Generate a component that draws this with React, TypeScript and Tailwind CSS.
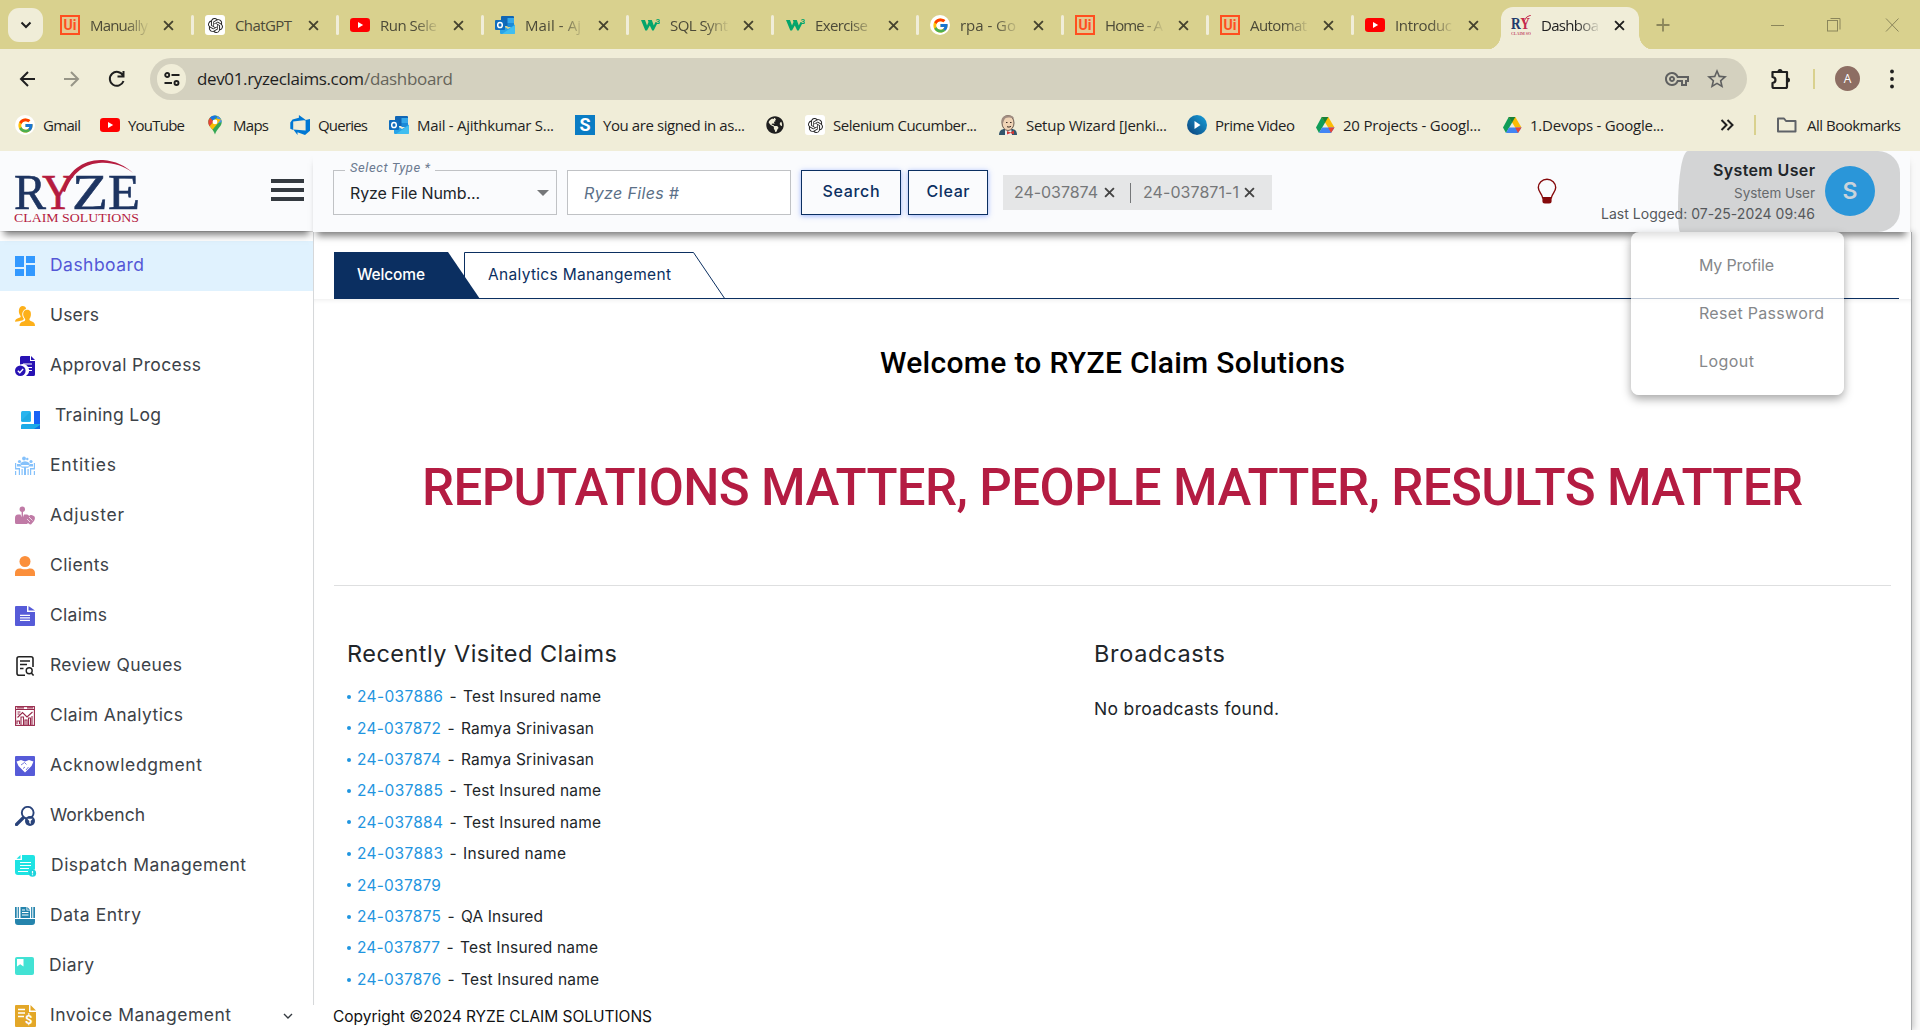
import { useLayoutEffect, useRef, useState, type ReactNode } from "react";
import { FcGoogle } from "react-icons/fc";
import { SiOpenai } from "react-icons/si";
import { MdOutlineVpnKey, MdStarBorder } from "react-icons/md";
import { FaGlobeAmericas } from "react-icons/fa";

/* Single line of text whose tracking is adjusted so that it fills the given width. */
function Fit({ w, className = "", children }: { w: number; className?: string; children: string }) {
  const ref = useRef<HTMLSpanElement>(null);
  const [spacing, setSpacing] = useState(0);
  useLayoutEffect(() => {
    const el = ref.current;
    if (!el) return;
    el.style.letterSpacing = "0px";
    const natural = el.getBoundingClientRect().width;
    const next = (w - natural) / Math.max(1, children.length - 1);
    el.style.letterSpacing = `${next}px`;
    setSpacing(next);
  }, [w, children]);
  return (
    <span className={`block shrink-0 whitespace-nowrap ${className}`} style={{ width: w }}>
      <span ref={ref} className="inline-block whitespace-pre" style={{ letterSpacing: `${spacing}px` }}>
        {children}
      </span>
    </span>
  );
}

/* ---------- Favicons ---------- */
const UiIcon = () => (
  <span className="flex size-5 shrink-0 items-center justify-center border-2 border-[#ff4f1f] bg-[#e3c992] font-['Roboto',sans-serif] text-[14px] leading-none font-bold text-[#ff4f1f]">
    Ui
  </span>
);
const GptIcon = () => (
  <span className="flex size-5 shrink-0 items-center justify-center rounded-[3px] bg-white text-[#222]">
    <SiOpenai size={15} />
  </span>
);
const YtIcon = () => (
  <svg viewBox="0 0 20 20" className="size-5 shrink-0">
    <rect y="3" width="20" height="14" rx="3.2" fill="#f00" />
    <path d="M8 7v6l5.2-3z" fill="#fff" />
  </svg>
);
const OutlookIcon = () => (
  <svg viewBox="0 0 20 20" className="size-5 shrink-0">
    <rect x="6" y="1" width="13" height="10" rx="1" fill="#1066b5" />
    <rect x="12.5" y="3" width="6.5" height="5" fill="#35a8ea" />
    <rect x="12.5" y="8" width="6.5" height="4" fill="#1b8ad8" />
    <path d="M5 9l8 5 7-4.5V18a1 1 0 0 1-1 1H6a1 1 0 0 1-1-1z" fill="#28a3e8" />
    <path d="M20 10v8a1 1 0 0 1-1 1H7z" fill="#50d0f5" opacity=".6" />
    <rect y="5" width="10" height="10" rx="1" fill="#0f6cbd" />
    <ellipse cx="5" cy="10" rx="2.3" ry="2.6" fill="none" stroke="#fff" strokeWidth="1.5" />
  </svg>
);
const W3Icon = () => (
  <svg viewBox="0 0 20 20" className="size-5 shrink-0">
    <path d="M1 5h4l2 5.500L8.500 7 7.800 5h4l2 5.500L15.500 7l2 1-3.800 7.500h-1.500L9.800 10.500 7 15.500H5.300z" fill="#04a56b" />
    <text x="15.500" y="9" fontSize="8" fontWeight="700" fill="#04a56b" fontFamily="Roboto, sans-serif">3</text>
  </svg>
);
const GIcon = () => (
  <span className="flex size-5 shrink-0 items-center justify-center rounded-full bg-white">
    <FcGoogle size={17} />
  </span>
);
const MapsIcon = () => (
  <svg viewBox="0 0 20 20" className="size-5 shrink-0">
    <path d="M10 .5c4 0 6.700 3 6.700 6.600 0 5-5 6.500-6.700 12.400C8.300 13.600 3.300 12.100 3.300 7.100 3.300 3.500 6 .5 10 .5z" fill="#34a853" />
    <path d="M10 .5c-2 0-3.800.8-5 2.200L8.200 5.400 12 .9A6.500 6.500 0 0 0 10 .5z" fill="#1a73e8" />
    <path d="M5 2.700A6.500 6.500 0 0 0 3.300 7.100c0 1.700.5 3 1.300 4.200l4-4.700z" fill="#ea4335" />
    <path d="M12 .9c2.500.7 4.700 3.100 4.700 6.100L11 9z" fill="#4a90f5" />
    <path d="M4.600 11.300c1 1.300 2 2.300 2.900 3.500L16 4.500l-5-1z" fill="#fbbc04" />
    <circle cx="10" cy="6.900" r="2.400" fill="#fff" />
  </svg>
);
const AzureIcon = () => (
  <svg viewBox="0 0 20 20" className="size-5 shrink-0">
    <path d="M20 4v11.700L15 20 7.500 17.200V20l-4.200-5.600 12.300 1V5zM15.800 5L8.900 0v2.700L2.500 4.600.3 7.400v6.400l2.900 1.200V6.600z" fill="#0078d4" />
  </svg>
);
const SIcon = () => (
  <span className="flex size-5 shrink-0 items-center justify-center bg-[#0a7cc4] font-['Roboto',sans-serif] text-[18px] leading-none font-bold text-white">S</span>
);
const JenkinsIcon = () => (
  <svg viewBox="0 0 20 20" className="size-5 shrink-0">
    <path d="M1 20c0-4 2.500-6 5.500-6h7c3.500 0 5.500 2 5.500 6z" fill="#33556b" />
    <path d="M7 13h6l1 7H7z" fill="#eee" />
    <ellipse cx="10" cy="8" rx="6" ry="7.500" fill="#efd3b5" stroke="#4a3a32" strokeWidth=".8" />
    <path d="M3.600 8C2.500 3 6 .3 10 .3S16 2 16 4c-3-1.800-7-2-9-.5C6 5 5.500 7 4.800 9z" fill="#a08c80" />
    <path d="M8 7.500h1.500M12 7.500h1.500M9 11.700q2 1 4-.3" stroke="#3a2a22" fill="none" />
    <path d="M9 16l3.500 1.500L16 15.500v4l-3.500-1.500L9 19.500z" fill="#d33833" />
  </svg>
);
const PrimeIcon = () => (
  <svg viewBox="0 0 20 20" className="size-5 shrink-0">
    <defs>
      <linearGradient id="prime" x1="1" y1="0" x2="0" y2="1">
        <stop offset="0" stopColor="#16a0dc" />
        <stop offset="1" stopColor="#0c3f77" />
      </linearGradient>
    </defs>
    <circle cx="10" cy="10" r="10" fill="url(#prime)" />
    <path d="M7.500 6v8l6-4z" fill="#fff" />
  </svg>
);
const DriveIcon = () => (
  <svg viewBox="0 0 20 20" className="size-5 shrink-0">
    <path d="M6.700 2h6.600L10 7.800 4 18 1 12.500z" fill="#0f9d58" />
    <path d="M6.700 2h6.600l6.200 10.500h-6.300z" fill="#fbbc04" />
    <path d="M7 12.500h12.500L16 18H4z" fill="#4285f4" />
    <path d="M6.700 2h6.600L10 7.800z" fill="#188038" />
    <path d="M13.200 12.500h6.300L16 18z" fill="#ea4335" />
  </svg>
);
const RyzeFav = () => (
  <svg viewBox="0 0 20 20" className="size-5 shrink-0 overflow-hidden" fontFamily="'Liberation Serif', serif" fontWeight="700">
    <text x="0" y="14" fontSize="16" fill="#223a6b" textLength="19" lengthAdjust="spacingAndGlyphs">
      R<tspan fill="#c42a4d">Y</tspan>
    </text>
    <path d="M13 6q2-5 7-6" stroke="#c42a4d" fill="none" />
    <text x="0" y="19.500" fontSize="4.500" fill="#c4506a" textLength="20" lengthAdjust="spacingAndGlyphs">CLAIM SO</text>
  </svg>
);
const Cross = ({ className = "" }: { className?: string }) => (
  <svg viewBox="0 0 10 10" className={`size-[11px] shrink-0 ${className}`}>
    <path d="M1 1l8 8M9 1L1 9" stroke="currentColor" strokeWidth="1.700" />
  </svg>
);

const tabs: { icon: ReactNode; text: string; w: number }[] = [
  { icon: <UiIcon />, text: "Manually", w: 58 },
  { icon: <GptIcon />, text: "ChatGPT", w: 57 },
  { icon: <YtIcon />, text: "Run Sele", w: 57 },
  { icon: <OutlookIcon />, text: "Mail - Aj", w: 56 },
  { icon: <W3Icon />, text: "SQL Synt", w: 58 },
  { icon: <W3Icon />, text: "Exercise", w: 53 },
  { icon: <GIcon />, text: "rpa - Go", w: 56 },
  { icon: <UiIcon />, text: "Home - A", w: 58 },
  { icon: <UiIcon />, text: "Automat", w: 57 },
  { icon: <YtIcon />, text: "Introduc", w: 57 },
];

function TabStrip() {
  return (
    <div className="flex h-[50px] bg-[#d9d18e]">
      <div className="mt-2 ml-2 flex h-[34px] w-[35px] items-center justify-center rounded-[11px] bg-[#f0edd8]">
        <svg viewBox="0 0 12 8" className="h-2 w-3">
          <path d="M1.500 1.500L6 6l4.500-4.500" fill="none" stroke="#1f1f1f" strokeWidth="2" />
        </svg>
      </div>
      <div className="ml-[6px] flex">
        {tabs.map((t, i) => (
          <div key={i} className={`flex h-[50px] items-center pl-[11px] ${i === 9 ? "w-[132px]" : "w-[145px]"}`}>
            {t.icon}
            <div className={`ml-[10px] w-[60px] ${i === 1 ? "" : "[mask-image:linear-gradient(to_right,#000_58%,transparent_100%)]"}`}>
              <Fit w={t.w} className="text-[15px] text-[#4c4a38]">{t.text}</Fit>
            </div>
            <Cross className="ml-[13px] text-[#46442f]" />
            {i !== 9 && <span className="ml-[17px] h-5 w-[3px] rounded bg-[#f0edd8]" />}
          </div>
        ))}
      </div>
      <div className="size-[15px] self-end bg-[radial-gradient(circle_at_0_0,transparent_14.500px,#f0edd8_15px)]" />
      <div className="mt-[7px] flex h-[43px] w-[138px] items-center rounded-t-[12px] bg-[#f0edd8] pb-[7px] pl-[10px]">
        <RyzeFav />
        <div className="ml-[10px] w-[60px] [mask-image:linear-gradient(to_right,#000_58%,transparent_100%)]">
          <Fit w={58} className="text-[15px] text-[#1f1f1f]">Dashboa</Fit>
        </div>
        <Cross className="ml-[13px] text-[#1f1f1f]" />
      </div>
      <div className="size-[15px] self-end bg-[radial-gradient(circle_at_100%_0,transparent_14.500px,#f0edd8_15px)]" />
      <svg viewBox="0 0 14 14" className="mt-[18px] ml-[2px] size-[14px]">
        <path d="M7 .5v13M.5 7h13" stroke="#8b865b" strokeWidth="1.800" />
      </svg>
      <svg viewBox="0 0 130 16" className="mt-[17px] ml-[101px] h-4 w-[130px]" fill="none" stroke="#8b865b">
        <path d="M0 8.500h13M115 1.500l12.500 13M127.500 1.500l-12.500 13M59.500 1.500h9.500v11" />
        <rect x="56.500" y="3.500" width="10" height="10.500" />
      </svg>
    </div>
  );
}

function Toolbar() {
  return (
    <div className="-mt-px flex h-[59px] items-center bg-[#f0edd8] text-[#1f1f1f]">
      <svg viewBox="0 0 106 18" className="ml-[19px] h-[18px] w-[106px]" fill="none" strokeWidth="2">
        <path d="M16 9H2M9 2L2 9l7 7" stroke="#1f1f1f" />
        <path d="M45 9h14M52 2l7 7-7 7" stroke="#979587" />
        <path d="M104 5.500A7 7 0 1 0 104.500 11M104.500 1v5.500H98.500" stroke="#1f1f1f" />
      </svg>
      <div className="ml-[25px] flex h-[42px] w-[1597px] items-center rounded-full bg-[#d4d1bf] pl-[7px]">
        <span className="flex h-[30px] w-[29px] items-center justify-center rounded-full bg-[#f0edd8]">
          <svg viewBox="0 0 16 14" className="h-[14px] w-4" fill="none" stroke="#1f1f1f" strokeWidth="1.900">
            <circle cx="3.200" cy="3" r="2" />
            <path d="M7.500 3H15.500M.5 11H8" />
            <circle cx="12.500" cy="11" r="2" />
          </svg>
        </span>
        <span className="ml-[11px] flex font-['Open_Sans','Noto_Sans',sans-serif] text-[17px] leading-6">
          <Fit w={167} className="text-[#1f1f1f]">dev01.ryzeclaims.com</Fit>
          <Fit w={89} className="text-[#66645a]">/dashboard</Fit>
        </span>
        <MdOutlineVpnKey className="ml-[1212px] text-[#5f6060]" size={24} />
        <MdStarBorder className="ml-[16px] text-[#5f6060]" size={24} />
      </div>
      <svg viewBox="0 0 22 22" className="ml-[23px] size-[22px]">
        <path d="M2.500 4h14.500v14.500q0 1.500-1.500 1.500H4q-1.500 0-1.500-1.500V15q3-.5 3-3t-3-3z" fill="none" stroke="#1f1f1f" strokeWidth="2.200" strokeLinejoin="round" />
        <path d="M7.500 3.500a2.500 2.500 0 0 1 5 0zM17.500 9.500a2.500 2.500 0 0 1 0 5z" fill="#1f1f1f" />
      </svg>
      <span className="ml-[21px] h-5 w-[2px] bg-[#d9d18e]" />
      <span className="ml-[20px] flex size-[25px] items-center justify-center rounded-full bg-[#8d6e63] text-[12px] text-white">A</span>
      <svg viewBox="0 0 4 20" className="ml-[30px] h-5 w-1" fill="#1f1f1f">
        <circle cx="2" cy="2.500" r="1.900" />
        <circle cx="2" cy="10" r="1.900" />
        <circle cx="2" cy="17.500" r="1.900" />
      </svg>
    </div>
  );
}

function Bookmark({ icon, text, w, m }: { icon: ReactNode; text?: string; w?: number; m: string }) {
  return (
    <div className={`flex items-center gap-2 ${m}`}>
      {icon}
      {text && w && <Fit w={w} className="text-[15px]">{text}</Fit>}
    </div>
  );
}

function Bookmarks() {
  return (
    <div className="flex h-[43px] items-center bg-[#f0edd8] pb-[9px] text-[#1f1f1f]">
      <Bookmark m="ml-[15px] -mr-[2px]" icon={<GIcon />} text="Gmail" w={38} />
      <Bookmark m="ml-[21px]" icon={<YtIcon />} text="YouTube" w={57} />
      <Bookmark m="ml-[20px]" icon={<MapsIcon />} text="Maps" w={36} />
      <Bookmark m="ml-[21px]" icon={<AzureIcon />} text="Queries" w={50} />
      <Bookmark m="ml-[21px]" icon={<OutlookIcon />} text="Mail - Ajithkumar S..." w={137} />
      <Bookmark m="ml-[21px]" icon={<SIcon />} text="You are signed in as..." w={142} />
      <Bookmark m="ml-[20px]" icon={<span className="flex size-5 items-center justify-center"><FaGlobeAmericas size={18} /></span>} />
      <Bookmark m="ml-[20px]" icon={<GptIcon />} text="Selenium Cucumber..." w={144} />
      <Bookmark m="ml-[21px]" icon={<JenkinsIcon />} text="Setup Wizard [Jenki..." w={141} />
      <Bookmark m="ml-[20px]" icon={<PrimeIcon />} text="Prime Video" w={80} />
      <Bookmark m="ml-[20px]" icon={<DriveIcon />} text="20 Projects - Googl..." w={138} />
      <Bookmark m="ml-[21px]" icon={<DriveIcon />} text="1.Devops - Google..." w={134} />
      <svg viewBox="0 0 14 12" className="ml-[56px] h-3 w-[14px]" fill="none" stroke="#1f1f1f" strokeWidth="2">
        <path d="M1.500 1l5 5-5 5M7.500 1l5 5-5 5" />
      </svg>
      <span className="ml-[20px] h-5 w-[2px] bg-[#d9d18e]" />
      <svg viewBox="0 0 22 18" className="ml-[20px] h-[18px] w-[22px]" fill="none" stroke="#5f6368" strokeWidth="2">
        <path d="M2 2.500h6l2 2.500h9.500v10.500H2z" strokeLinejoin="round" />
      </svg>
      <Fit w={94} className="ml-[9px] text-[15px]">All Bookmarks</Fit>
    </div>
  );
}

/* ---------- Application header ---------- */
function Logo() {
  return (
    <svg viewBox="0 0 128 66" className="h-[66px] w-[128px]" fontFamily="'Liberation Serif', serif">
      <g fontSize="51" fill="#1d3461" stroke="#1d3461" strokeWidth=".6">
        <text x="0" y="51" textLength="32" lengthAdjust="spacingAndGlyphs">R</text>
        <text x="28" y="51" textLength="32" lengthAdjust="spacingAndGlyphs" fill="#b51c3f" stroke="#b51c3f">Y</text>
        <text x="58" y="51" textLength="36" lengthAdjust="spacingAndGlyphs">Z</text>
        <text x="94" y="51" textLength="32" lengthAdjust="spacingAndGlyphs">E</text>
      </g>
      <path d="M48 33C54 12 70 1 89 2c12 .8 23 6 30 13C110 8 99 4.500 88 4.800 70 5.500 58 15 51 34z" fill="#b51c3f" />
      <text x="0" y="63.500" fontSize="13.500" fill="#b51c3f" textLength="125" lengthAdjust="spacingAndGlyphs">CLAIM SOLUTIONS</text>
    </svg>
  );
}

function Header() {
  return (
    <header className="relative z-20 flex h-[81px] w-[1910px] font-['Roboto',sans-serif]">
      <div className="flex h-[80px] w-[313px] bg-[#fafbfd] shadow-[0_8px_7px_-4px_rgba(0,0,0,0.5)]">
        <div className="mt-[7px] ml-[14px]"><Logo /></div>
        <div className="mt-[28px] ml-[129px] flex h-[22px] w-[33px] flex-col justify-between">
          <span className="h-[4px] bg-[#343a40]" />
          <span className="h-[4px] bg-[#343a40]" />
          <span className="h-[4px] bg-[#343a40]" />
        </div>
      </div>
      <div className="relative flex flex-1 bg-[#fafbfd] shadow-[0_8px_7px_-4px_rgba(0,0,0,0.5)]">
        <div className="relative mt-[19px] ml-[20px] flex h-[45px] w-[224px] items-center border border-[#c0c2c5] pl-4">
          <span className="absolute -top-[11px] left-[11px] bg-[#fafbfd] px-[5px] text-[13px] leading-4 text-[#6b7a90] italic">
            <Fit w={80}>Select Type *</Fit>
          </span>
          <Fit w={130} className="font-['Inter',sans-serif] text-[16px] text-[#212529]">Ryze File Numb...</Fit>
          <svg viewBox="0 0 12 6" className="ml-[57px] h-[6px] w-3"><path d="M0 0h12L6 6z" fill="#757779" /></svg>
        </div>
        <div className="mt-[19px] ml-[10px] flex h-[45px] w-[224px] items-center border border-[#c0c2c5] bg-white pl-4 font-['Inter',sans-serif] text-[16px] text-[#5b7088] italic">
          <Fit w={95}>Ryze Files #</Fit>
        </div>
        <button className="mt-[19px] ml-[10px] flex h-[45px] w-[100px] items-center justify-center border border-[#0b2f61] pb-1 font-['Inter',sans-serif] text-[16px] font-medium text-[#0b2f61] shadow-[0_1px_5px_rgba(60,110,255,0.5)]">
          <Fit w={57}>Search</Fit>
        </button>
        <button className="mt-[19px] ml-[7px] flex h-[45px] w-[80px] items-center justify-center border border-[#0b2f61] pb-1 font-['Inter',sans-serif] text-[16px] font-medium text-[#0b2f61] shadow-[0_1px_5px_rgba(60,110,255,0.5)]">
          <Fit w={43}>Clear</Fit>
        </button>
        <div className="mt-[24px] ml-[15px] flex h-[35px] w-[269px] items-center bg-[#e5e6e7] pl-[11px] font-['Inter',sans-serif] text-[16px] text-[#757779]">
          <Fit w={84} className="pb-px">24-037874</Fit>
          <Cross className="ml-[6px] text-[#444]" />
          <span className="ml-[15px] h-5 w-px bg-[#757779]" />
          <Fit w={96} className="ml-[12px] pb-px">24-037871-1</Fit>
          <Cross className="ml-[5px] text-[#444]" />
        </div>
        <svg viewBox="0 0 20 26" className="mt-[27px] ml-[265px] h-[26px] w-5">
          <path d="M10 1.200c-4.900 0-8.700 3.800-8.700 8.300 0 4.200 3.900 6.400 4.300 10.200h8.800c.4-3.800 4.300-6 4.300-10.200 0-4.500-3.800-8.300-8.700-8.300z" fill="none" stroke="#850a0c" strokeWidth="1.400" />
          <path d="M5.400 19.300h9.200v3.700q0 2.500-2.500 2.500H7.900q-2.500 0-2.500-2.500z" fill="#850a0c" />
        </svg>
        <div className="absolute top-0 right-[10px] h-[81px] w-[222px] bg-[#d3d4d5] [border-radius:10px_22px_22px_2px/56px_22px_22px_25px]" />
        <div className="relative ml-auto flex flex-col items-end pt-[7px] font-['Inter',sans-serif]">
          <Fit w={102} className="text-[16px] leading-[25px] font-semibold text-[#212529]">System User</Fit>
          <Fit w={81} className="text-[13.500px] leading-[21px] text-[#66696c]">System User</Fit>
          <Fit w={214} className="text-[14px] leading-[19px] text-[#55585b]">Last Logged: 07-25-2024 09:46</Fit>
        </div>
        <div className="relative mt-[15px] mr-[35px] ml-[10px] flex size-[50px] items-center justify-center rounded-full bg-[#2a96d9] font-['Inter',sans-serif] text-[23px] font-semibold text-[#c9d3db]">S</div>
      </div>
    </header>
  );
}

function UserMenu() {
  return (
    <div className="absolute top-[232px] left-[1631px] z-30 h-[163px] w-[213px] rounded-[8px] bg-white/75 pt-[9px] pl-[68px] font-['Inter',sans-serif] text-[16px] leading-[48px] text-[#85878a] shadow-[0_4px_10px_rgba(0,0,0,0.35)]">
      <Fit w={75}>My Profile</Fit>
      <Fit w={125}>Reset Password</Fit>
      <Fit w={55}>Logout</Fit>
    </div>
  );
}

/* ---------- Sidebar ---------- */
const I = ({ children, className = "size-5" }: { children: ReactNode; className?: string }) => (
  <svg viewBox="0 0 20 20" className={`shrink-0 ${className}`}>{children}</svg>
);

const nav: { text: string; w: number; gap: string; icon: ReactNode }[] = [
  { text: "Dashboard", w: 94, gap: "ml-[15px]", icon: <I><path d="M0 0h9v11H0zM0 13h9v7H0zM11 0h9v7h-9zM11 9h9v11h-9z" fill="#3399ff" /></I> },
  {
    text: "Users", w: 49, gap: "ml-[15px]",
    icon: <I><g fill="#fdb01a"><path d="M7.500 0c2.200 0 3.500 1.300 3.600 3C8.300 3.800 7 6 7.300 9c.2 1.800 1 3 1.800 4l-1.800 1.500C5 15 3 15.500 0 15.800c.2-2.600 2-3.300 5-4.200.8-.3.800-1.200.4-1.800C2.500 6 4 0 7.500 0z" /><path d="M12.200 3.800c3 0 4 2.400 3.700 5.200-.2 2-.9 3-1.500 4 .1 1.500.6 1.700 2.600 2.400 2.300.8 3 2.200 3 4.600H4.500c0-2.600 1.500-3.900 3.700-4.500 1.600-.5 2-.9 2-2.300C8.500 11 8 9 8.200 7.500c.3-2.500 1.600-3.700 4-3.700z" /></g></I>,
  },
  {
    text: "Approval Process", w: 151, gap: "ml-[15px]",
    icon: <I><path d="M5 1.500Q5 0 6.500 0H15v5h5v13.500q0 1.500-1.500 1.500H11a6.500 6.500 0 0 0-6-11.500zM16 0l4 4h-4z" fill="#2812b4" /><circle cx="5.300" cy="14.700" r="5.300" fill="#2812b4" /><path d="M2.800 14.800l2 2 3.400-3.800" stroke="#fff" strokeWidth="1.300" fill="none" /><path d="M8 8h9M11 11.500h6M12.500 14.500H17" stroke="#fff" strokeWidth="1.100" /></I>,
  },
  {
    text: "Training Log", w: 106, gap: "ml-[20px] mt-[10px]",
    icon: <I><rect x="1" y="0" width="10" height="11" rx="1.500" fill="#28b4ee" /><path d="M1 10L10 1v8z" fill="#149fd8" opacity=".5" /><path d="M14 0h6v13h-6z" fill="#1762f5" /><path d="M1 14.500q0-1.500 1.500-1.500H20v5H1z" fill="#1cabe8" /><path d="M14 18l6-4v4z" fill="#1271e0" /></I>,
  },
  {
    text: "Entities", w: 66, gap: "ml-[15px]",
    icon: <I><g fill="#85c1fb"><circle cx="9" cy="2.500" r="1.900" /><circle cx="12.300" cy="3" r="1.200" /><circle cx="4.500" cy="5.500" r="1.600" /><circle cx="16" cy="5.500" r="1.600" /><path d="M5.500 9V7q4.500-3.500 9 0v2zM0 7h1.200v5H5v7H3.800v-5.500H0zM20 7h-1.200v5H15v7h1.200v-5.500H20z" /><path d="M2 8h3l2 2.500H2zM18 8h-3l-2 2.500h5zM6.500 10.500h7v1.200H11V19H9v-7.300H6.500zM0 15h1.200v4H0zM18.800 15H20v4h-1.200zM6.500 13h1.200v6H6.500zM12.500 13h1.200v6h-1.200z" /></g></I>,
  },
  {
    text: "Adjuster", w: 74, gap: "ml-[15px]",
    icon: <I><g fill="#c07aa6"><circle cx="7.300" cy="3.200" r="2.700" /><path d="M6.600 5h1.400v8H6.600zM0 12q0-3.500 3-3.500h2.500l1.800 4.500L9 8.500h3q1.500 0 2 1.500l1.500-1q2-.5 4 1.500 1 2-.5 4.500l-3 3.500q-1.500 0-3-1.500l-1 1H1.500Q0 18 0 16.500z" /></g><path d="M12 13l3 3M14 11l3.500 3.500" stroke="#fff" strokeWidth=".7" /></I>,
  },
  { text: "Clients", w: 59, gap: "ml-[15px]", icon: <I><circle cx="10" cy="5.500" r="5.500" fill="#fb8f3b" /><path d="M0 20v-3c0-3 2-4.500 4.500-4.500 2 0 3 .8 5.500.8s3.500-.8 5.500-.8C18 12.500 20 14 20 17v3z" fill="#fb8f3b" /></I> },
  { text: "Claims", w: 57, gap: "ml-[15px]", icon: <I><path d="M0 1q0-1 1-1h11v6h8v13q0 1-1 1H1q-1 0-1-1zM13.500 0L20 4.500h-6.500z" fill="#565bd8" /><path d="M5 9.300h10M5 11.800h10M5 14.300h10" stroke="#fff" strokeWidth="1.200" /></I> },
  {
    text: "Review Queues", w: 132, gap: "ml-[15px]",
    icon: <I><path d="M10 19.200H4q-2 0-2-2V2.800q0-2 2-2h12q2 0 2 2V11" fill="none" stroke="#222" strokeWidth="1.600" /><path d="M5 5h10M5 8.500h7M5 12.500h3.500" stroke="#222" strokeWidth="1.400" /><circle cx="14.200" cy="14.800" r="3" fill="none" stroke="#222" strokeWidth="1.400" /><path d="M16.300 17l2.300 2.500" stroke="#222" strokeWidth="1.600" /></I>,
  },
  {
    text: "Claim Analytics", w: 133, gap: "ml-[15px]",
    icon: <I><g fill="none" stroke="#98284b" strokeWidth="1.100"><rect x=".6" y=".6" width="18.800" height="18.800" /><path d="M1 3.500h18M2 1.900h7M12 1.900h6M2.500 11.500l5-5L12 11l5.500-5M2 18v-3h2.500v3M6 19v-8h2.500v8M10 19v-5h2v5M13.500 19v-7h2v7M17 19v-9M2.500 6h3M2.500 8h2" /></g></I>,
  },
  {
    text: "Acknowledgment", w: 152, gap: "ml-[15px]",
    icon: <I><rect width="20" height="20" rx="1" fill="#565bd8" /><path d="M1.500 5.500L6 4l4 1.500L14 4l4.500 1.500L16.500 10 10 16.500 3.500 10z" fill="#fff" /><path d="M6 9l3.500-2.500 2 2M8 12.500l2-1.500M11 14l2.500-3" stroke="#565bd8" strokeWidth=".8" fill="none" /></I>,
  },
  {
    text: "Workbench", w: 95, gap: "ml-[15px]",
    icon: <I><circle cx="12.700" cy="6.800" r="5.900" fill="none" stroke="#29437a" strokeWidth="1.900" /><path d="M1.500 18.500L8 12" stroke="#29437a" strokeWidth="3.200" strokeLinecap="round" /><circle cx="15" cy="15" r="5" fill="#29437a" /><path d="M12.300 12.700h5.400L15.700 15v3l-1.400-1v-2z" fill="#fff" /></I>,
  },
  {
    text: "Dispatch Management", w: 195, gap: "ml-[15px] -mr-px",
    icon: <svg viewBox="0 0 22 22" className="size-[22px] shrink-0"><path d="M7 0h11q2 0 2 2v12.500q-4 0-4.500 5.500H3q-3 0-3-3h2V5h5zM5.500 0v3.800H1.500z" fill="#1ee3e3" /><path d="M0 5h3v12H0z" fill="#1ee3e3" /><path d="M5 7.500h11M5 10.500h11M5 13.500h9M3 16.500h10" stroke="#fff" strokeWidth="1.100" /><circle cx="17.500" cy="18.200" r="3.600" fill="#1ed3dc" /><path d="M17.500 16v2.500M17.500 19.300v1" stroke="#fff" strokeWidth="1.200" /></svg>,
  },
  {
    text: "Data Entry", w: 91, gap: "ml-[15px]",
    icon: <I><path d="M0 1h1.700v11H0zM2.700 1h1.200v11H2.700zM18.300 1H20v11h-1.700zM16.100 1h1.200v11h-1.200zM5.500 1h6v3.500H15V12H5.500zM12.300 1L15 3.700h-2.700zM0 13h20v3q0 3-3 3H3q-3 0-3-3z" fill="#2584ad" /><path d="M7 4h3M7 6.500h6.500M7 9h6.500" stroke="#fff" /></I>,
  },
  { text: "Diary", w: 45, gap: "ml-[15px] -mr-px", icon: <I><rect y="1" width="19" height="18" rx="2" fill="#42e2d4" /><path d="M2 3h6.500v7.500L5.200 8.200 2 10.500z" fill="#fff" /></I> },
  {
    text: "Invoice Management", w: 181, gap: "ml-[15px]",
    icon: <svg viewBox="0 0 21 22" className="h-[22px] w-[21px] shrink-0"><path d="M1 0h13v7h7v14q0 1-1 1H1q-1 0-1-1V1q0-1 1-1zM15.500 0L21 5.500h-5.500z" fill="#e3a728" /><path d="M3 4.500h7M3 8h7M3 11.500h6" stroke="#fff" strokeWidth="1.400" /><text x="10" y="19" fontSize="13" fontWeight="700" fill="#fff" fontFamily="Roboto, sans-serif">$</text></svg>,
  },
];

function Sidebar() {
  return (
    <nav className="flex w-[313px] shrink-0 flex-col overflow-hidden bg-white pt-[9px] font-['Inter',sans-serif] text-[17.500px] text-[#3c4248]">
      {nav.map((n, i) => (
        <div key={n.text} className={`flex h-[50px] shrink-0 items-center ${i === 0 ? "bg-[#e0f2fe] text-[#5457d6]" : ""}`}>
          <span className={`flex shrink-0 ${n.gap}`}>{n.icon}</span>
          <Fit w={n.w} className={n.text.startsWith("Invoice") ? "ml-[14px] pb-[2px]" : "ml-[15px] pb-[2px]"}>{n.text}</Fit>
          {n.text.startsWith("Invoice") && (
            <svg viewBox="0 0 10 7" className="ml-[52px] h-[7px] w-[10px]"><path d="M1 1l4 4 4-4" fill="none" stroke="#343a40" strokeWidth="1.400" /></svg>
          )}
        </div>
      ))}
    </nav>
  );
}

/* ---------- Main content ---------- */
const claims: [string, number, string, number][] = [
  ["24-037886", 86, "Test Insured name", 138],
  ["24-037872", 84, "Ramya Srinivasan", 133],
  ["24-037874", 84, "Ramya Srinivasan", 133],
  ["24-037885", 86, "Test Insured name", 138],
  ["24-037884", 86, "Test Insured name", 138],
  ["24-037883", 86, "Insured name", 103],
  ["24-037879", 84, "", 0],
  ["24-037875", 84, "QA Insured", 82],
  ["24-037877", 83, "Test Insured name", 138],
  ["24-037876", 84, "Test Insured name", 138],
];

function Main() {
  return (
    <main className="flex w-[1598px] flex-col font-['Inter',sans-serif] text-[#212529]">
      <div className="flex h-[773px] flex-col border-l border-[#d6d8da] bg-white">
        <div className="ml-[20px] flex h-[67px] w-[1565px] border-b border-[#0b2f61] pt-5">
          <div className="z-10 flex h-[47px] w-[146px] items-center bg-[#0b2f61] pb-[2px] pl-[23px] text-[15.500px] font-medium text-white [clip-path:polygon(0_0,114px_0,146px_100%,0_100%)]">
            <Fit w={68}>Welcome</Fit>
          </div>
          <div className="relative -ml-4 flex h-[47px] w-[262px] items-center pb-[2px] pl-6 text-[15.500px] text-[#0b2f61]">
            <svg viewBox="0 0 262 47" className="absolute top-0 left-0 h-[47px] w-[262px]" fill="none" stroke="#0b2f61">
              <path d="M.5 47V.5H229.500L261 47" />
            </svg>
            <Fit w={183}>Analytics Manangement</Fit>
          </div>
        </div>
        <div className="flex flex-1 flex-col shadow-[inset_0_4px_5px_-3px_rgba(0,0,0,0.08)]">
          <div className="mt-[44px] flex justify-center font-['Roboto',sans-serif] text-[30px] leading-[40px] font-medium text-black">
            <Fit w={465}>Welcome to RYZE Claim Solutions</Fit>
          </div>
          <div className="mt-[75px] flex justify-center font-['Roboto',sans-serif] text-[51px] leading-[60px] font-medium text-[#b41c42]">
            <Fit w={1381}>REPUTATIONS MATTER, PEOPLE MATTER, RESULTS MATTER</Fit>
          </div>
          <div className="mt-[67px] ml-[20px] h-px w-[1557px] bg-[#dedfe0]" />
          <div className="flex">
            <section className="ml-[33px] w-[747px] pt-[52px]">
              <h2 className="text-[23.500px] leading-8"><Fit w={270}>Recently Visited Claims</Fit></h2>
              <ul className="mt-[11px]">
                {claims.map(([id, w, name, nw]) => (
                  <li key={id} className="flex h-[31.430px] items-center text-[15.500px]">
                    <span className="mr-[6px] size-1 rounded-full bg-[#1f95e0]" />
                    <Fit w={w} className="text-[#1f95e0]">{id}</Fit>
                    {name && <span className="mx-[6.500px] w-[7px] text-center">-</span>}
                    {name && <Fit w={nw}>{name}</Fit>}
                  </li>
                ))}
              </ul>
            </section>
            <section className="pt-[52px]">
              <h2 className="text-[23.500px] leading-8"><Fit w={131}>Broadcasts</Fit></h2>
              <p className="mt-[27px] text-[17.500px] leading-6"><Fit w={185}>No broadcasts found.</Fit></p>
            </section>
          </div>
        </div>
      </div>
      <footer className="flex h-[25px] items-center bg-white pb-[2px] pl-5 text-[15.500px] text-[#111]">
        <Fit w={319}>Copyright ©2024 RYZE CLAIM SOLUTIONS</Fit>
      </footer>
    </main>
  );
}

export default function App() {
  return (
    <div className="relative flex h-[1030px] w-[1920px] flex-col overflow-hidden bg-[#fafafa]">
      <div className="h-[151px] shrink-0 bg-[#f0edd8] font-['Open_Sans','Noto_Sans',sans-serif]">
        <TabStrip />
        <Toolbar />
        <Bookmarks />
      </div>
      <Header />
      <div className="flex h-[798px] w-[1912px] border-r border-[#a9abad] bg-white shadow-[2px_0_6px_rgba(0,0,0,0.2)]">
        <Sidebar />
        <Main />
      </div>
      <UserMenu />
    </div>
  );
}
